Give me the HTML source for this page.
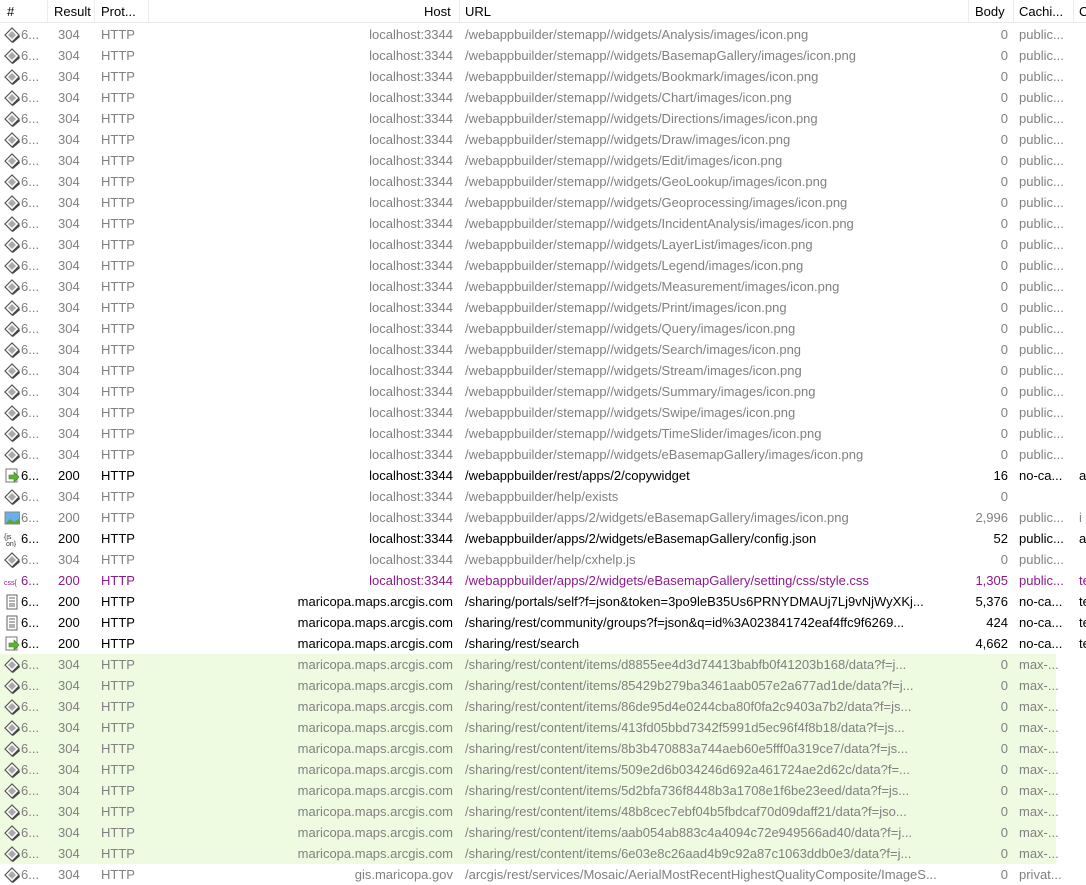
<!DOCTYPE html>
<html><head><meta charset="utf-8"><style>
*{margin:0;padding:0;box-sizing:border-box}
body{width:1086px;height:883px;overflow:hidden;background:#fff;font-family:"Liberation Sans",Tahoma,sans-serif;font-size:13px;color:#808080}
.hd{position:absolute;left:0;top:0;width:1086px;height:23px;border-bottom:1px solid #e8e8e8;color:#000}
.hd span{position:absolute;top:4px}
.sep{position:absolute;top:0;width:1px;height:22px;background:#ececec}
.r{position:absolute;left:0;width:1086px;height:21px;line-height:21px;white-space:nowrap}
.r span{position:absolute;top:0}
.g{background:linear-gradient(to right,#eefbe0 0,#eefbe0 1056px,transparent 1056px)}
.k{color:#000}.p{color:#8b1a8b}
.ic{position:absolute;left:4px;top:3px;width:16px;height:16px}
.n{left:21px}.res{left:58px}.pr{left:101px}
.h{right:633px;text-align:right}
.u{left:465px}
.b{right:78px;text-align:right}
.c{left:1019px}
.t{left:1079px}
</style></head><body>
<div class="hd">
<span style="left:7px">#</span><span style="left:54px">Result</span><span style="left:101px">Prot...</span><span style="left:424px">Host</span><span style="left:465px">URL</span><span style="left:975px">Body</span><span style="left:1019px">Cachi...</span><span style="left:1079px">C</span>
<div class="sep" style="left:47px"></div><div class="sep" style="left:94px"></div><div class="sep" style="left:148px"></div><div class="sep" style="left:459px"></div><div class="sep" style="left:968px"></div><div class="sep" style="left:1013px"></div><div class="sep" style="left:1073px"></div>
</div>
<svg width="0" height="0" style="position:absolute"><defs>
<g id="d"><path d="M1 8 L8 1 L15 8 L8 15Z" fill="#fff" stroke="#555" stroke-width="1.2"/><path d="M4 8 L8 4 L12 8 L8 12Z" fill="#aaa"/><path d="M8 15 L15 8 L16 10 L9 16Z" fill="#444"/></g>
<g id="a"><rect x="2" y="1" width="11" height="13" fill="#fff" stroke="#777"/><path d="M5 7h5V4l5 5-5 5v-3H5Z" fill="#5bb531" stroke="#3a7a1a" stroke-width=".6"/></g>
<g id="im"><rect x="1" y="2" width="15" height="12" fill="#6ab0e8" stroke="#888"/><path d="M1 14 L6 9 L10 12 L16 8 V14Z" fill="#5aa83a"/></g>
<g id="doc"><rect x="3" y="1" width="10" height="14" fill="#fff" stroke="#666"/><path d="M5 4h6M5 7h6M5 10h6M5 12h6" stroke="#666"/></g>
</defs></svg>
<div style="position:absolute;top:24px;left:0">
<div class="r" style="top:0"><svg class="ic"><use href="#d"/></svg><span class="n">6...</span><span class="res">304</span><span class="pr">HTTP</span><span class="h">localhost:3344</span><span class="u">/webappbuilder/stemapp//widgets/Analysis/images/icon.png</span><span class="b">0</span><span class="c">public...</span></div>
<div class="r" style="top:21px"><svg class="ic"><use href="#d"/></svg><span class="n">6...</span><span class="res">304</span><span class="pr">HTTP</span><span class="h">localhost:3344</span><span class="u">/webappbuilder/stemapp//widgets/BasemapGallery/images/icon.png</span><span class="b">0</span><span class="c">public...</span></div>
<div class="r" style="top:42px"><svg class="ic"><use href="#d"/></svg><span class="n">6...</span><span class="res">304</span><span class="pr">HTTP</span><span class="h">localhost:3344</span><span class="u">/webappbuilder/stemapp//widgets/Bookmark/images/icon.png</span><span class="b">0</span><span class="c">public...</span></div>
<div class="r" style="top:63px"><svg class="ic"><use href="#d"/></svg><span class="n">6...</span><span class="res">304</span><span class="pr">HTTP</span><span class="h">localhost:3344</span><span class="u">/webappbuilder/stemapp//widgets/Chart/images/icon.png</span><span class="b">0</span><span class="c">public...</span></div>
<div class="r" style="top:84px"><svg class="ic"><use href="#d"/></svg><span class="n">6...</span><span class="res">304</span><span class="pr">HTTP</span><span class="h">localhost:3344</span><span class="u">/webappbuilder/stemapp//widgets/Directions/images/icon.png</span><span class="b">0</span><span class="c">public...</span></div>
<div class="r" style="top:105px"><svg class="ic"><use href="#d"/></svg><span class="n">6...</span><span class="res">304</span><span class="pr">HTTP</span><span class="h">localhost:3344</span><span class="u">/webappbuilder/stemapp//widgets/Draw/images/icon.png</span><span class="b">0</span><span class="c">public...</span></div>
<div class="r" style="top:126px"><svg class="ic"><use href="#d"/></svg><span class="n">6...</span><span class="res">304</span><span class="pr">HTTP</span><span class="h">localhost:3344</span><span class="u">/webappbuilder/stemapp//widgets/Edit/images/icon.png</span><span class="b">0</span><span class="c">public...</span></div>
<div class="r" style="top:147px"><svg class="ic"><use href="#d"/></svg><span class="n">6...</span><span class="res">304</span><span class="pr">HTTP</span><span class="h">localhost:3344</span><span class="u">/webappbuilder/stemapp//widgets/GeoLookup/images/icon.png</span><span class="b">0</span><span class="c">public...</span></div>
<div class="r" style="top:168px"><svg class="ic"><use href="#d"/></svg><span class="n">6...</span><span class="res">304</span><span class="pr">HTTP</span><span class="h">localhost:3344</span><span class="u">/webappbuilder/stemapp//widgets/Geoprocessing/images/icon.png</span><span class="b">0</span><span class="c">public...</span></div>
<div class="r" style="top:189px"><svg class="ic"><use href="#d"/></svg><span class="n">6...</span><span class="res">304</span><span class="pr">HTTP</span><span class="h">localhost:3344</span><span class="u">/webappbuilder/stemapp//widgets/IncidentAnalysis/images/icon.png</span><span class="b">0</span><span class="c">public...</span></div>
<div class="r" style="top:210px"><svg class="ic"><use href="#d"/></svg><span class="n">6...</span><span class="res">304</span><span class="pr">HTTP</span><span class="h">localhost:3344</span><span class="u">/webappbuilder/stemapp//widgets/LayerList/images/icon.png</span><span class="b">0</span><span class="c">public...</span></div>
<div class="r" style="top:231px"><svg class="ic"><use href="#d"/></svg><span class="n">6...</span><span class="res">304</span><span class="pr">HTTP</span><span class="h">localhost:3344</span><span class="u">/webappbuilder/stemapp//widgets/Legend/images/icon.png</span><span class="b">0</span><span class="c">public...</span></div>
<div class="r" style="top:252px"><svg class="ic"><use href="#d"/></svg><span class="n">6...</span><span class="res">304</span><span class="pr">HTTP</span><span class="h">localhost:3344</span><span class="u">/webappbuilder/stemapp//widgets/Measurement/images/icon.png</span><span class="b">0</span><span class="c">public...</span></div>
<div class="r" style="top:273px"><svg class="ic"><use href="#d"/></svg><span class="n">6...</span><span class="res">304</span><span class="pr">HTTP</span><span class="h">localhost:3344</span><span class="u">/webappbuilder/stemapp//widgets/Print/images/icon.png</span><span class="b">0</span><span class="c">public...</span></div>
<div class="r" style="top:294px"><svg class="ic"><use href="#d"/></svg><span class="n">6...</span><span class="res">304</span><span class="pr">HTTP</span><span class="h">localhost:3344</span><span class="u">/webappbuilder/stemapp//widgets/Query/images/icon.png</span><span class="b">0</span><span class="c">public...</span></div>
<div class="r" style="top:315px"><svg class="ic"><use href="#d"/></svg><span class="n">6...</span><span class="res">304</span><span class="pr">HTTP</span><span class="h">localhost:3344</span><span class="u">/webappbuilder/stemapp//widgets/Search/images/icon.png</span><span class="b">0</span><span class="c">public...</span></div>
<div class="r" style="top:336px"><svg class="ic"><use href="#d"/></svg><span class="n">6...</span><span class="res">304</span><span class="pr">HTTP</span><span class="h">localhost:3344</span><span class="u">/webappbuilder/stemapp//widgets/Stream/images/icon.png</span><span class="b">0</span><span class="c">public...</span></div>
<div class="r" style="top:357px"><svg class="ic"><use href="#d"/></svg><span class="n">6...</span><span class="res">304</span><span class="pr">HTTP</span><span class="h">localhost:3344</span><span class="u">/webappbuilder/stemapp//widgets/Summary/images/icon.png</span><span class="b">0</span><span class="c">public...</span></div>
<div class="r" style="top:378px"><svg class="ic"><use href="#d"/></svg><span class="n">6...</span><span class="res">304</span><span class="pr">HTTP</span><span class="h">localhost:3344</span><span class="u">/webappbuilder/stemapp//widgets/Swipe/images/icon.png</span><span class="b">0</span><span class="c">public...</span></div>
<div class="r" style="top:399px"><svg class="ic"><use href="#d"/></svg><span class="n">6...</span><span class="res">304</span><span class="pr">HTTP</span><span class="h">localhost:3344</span><span class="u">/webappbuilder/stemapp//widgets/TimeSlider/images/icon.png</span><span class="b">0</span><span class="c">public...</span></div>
<div class="r" style="top:420px"><svg class="ic"><use href="#d"/></svg><span class="n">6...</span><span class="res">304</span><span class="pr">HTTP</span><span class="h">localhost:3344</span><span class="u">/webappbuilder/stemapp//widgets/eBasemapGallery/images/icon.png</span><span class="b">0</span><span class="c">public...</span></div>
<div class="r k" style="top:441px"><svg class="ic"><use href="#a"/></svg><span class="n">6...</span><span class="res">200</span><span class="pr">HTTP</span><span class="h">localhost:3344</span><span class="u">/webappbuilder/rest/apps/2/copywidget</span><span class="b">16</span><span class="c">no-ca...</span><span class="t">a</span></div>
<div class="r" style="top:462px"><svg class="ic"><use href="#d"/></svg><span class="n">6...</span><span class="res">304</span><span class="pr">HTTP</span><span class="h">localhost:3344</span><span class="u">/webappbuilder/help/exists</span><span class="b">0</span></div>
<div class="r" style="top:483px"><svg class="ic"><use href="#im"/></svg><span class="n">6...</span><span class="res">200</span><span class="pr">HTTP</span><span class="h">localhost:3344</span><span class="u">/webappbuilder/apps/2/widgets/eBasemapGallery/images/icon.png</span><span class="b">2,996</span><span class="c">public...</span><span class="t">i</span></div>
<div class="r k" style="top:504px"><svg class="ic"><text x="0" y="8" font-size="7" fill="#333" font-family="Liberation Sans">{js</text><text x="2" y="15" font-size="7" fill="#333" font-family="Liberation Sans">on}</text></svg><span class="n">6...</span><span class="res">200</span><span class="pr">HTTP</span><span class="h">localhost:3344</span><span class="u">/webappbuilder/apps/2/widgets/eBasemapGallery/config.json</span><span class="b">52</span><span class="c">public...</span><span class="t">a</span></div>
<div class="r" style="top:525px"><svg class="ic"><use href="#d"/></svg><span class="n">6...</span><span class="res">304</span><span class="pr">HTTP</span><span class="h">localhost:3344</span><span class="u">/webappbuilder/help/cxhelp.js</span><span class="b">0</span><span class="c">public...</span></div>
<div class="r p" style="top:546px"><svg class="ic"><text x="0" y="12" font-size="7" fill="#8b1a8b" font-family="Liberation Sans">css{</text></svg><span class="n">6...</span><span class="res">200</span><span class="pr">HTTP</span><span class="h">localhost:3344</span><span class="u">/webappbuilder/apps/2/widgets/eBasemapGallery/setting/css/style.css</span><span class="b">1,305</span><span class="c">public...</span><span class="t">te</span></div>
<div class="r k" style="top:567px"><svg class="ic"><use href="#doc"/></svg><span class="n">6...</span><span class="res">200</span><span class="pr">HTTP</span><span class="h">maricopa.maps.arcgis.com</span><span class="u">/sharing/portals/self?f=json&amp;token=3po9leB35Us6PRNYDMAUj7Lj9vNjWyXKj...</span><span class="b">5,376</span><span class="c">no-ca...</span><span class="t">te</span></div>
<div class="r k" style="top:588px"><svg class="ic"><use href="#doc"/></svg><span class="n">6...</span><span class="res">200</span><span class="pr">HTTP</span><span class="h">maricopa.maps.arcgis.com</span><span class="u">/sharing/rest/community/groups?f=json&amp;q=id%3A023841742eaf4ffc9f6269...</span><span class="b">424</span><span class="c">no-ca...</span><span class="t">te</span></div>
<div class="r k" style="top:609px"><svg class="ic"><use href="#a"/></svg><span class="n">6...</span><span class="res">200</span><span class="pr">HTTP</span><span class="h">maricopa.maps.arcgis.com</span><span class="u">/sharing/rest/search</span><span class="b">4,662</span><span class="c">no-ca...</span><span class="t">te</span></div>
<div class="r g" style="top:630px"><svg class="ic"><use href="#d"/></svg><span class="n">6...</span><span class="res">304</span><span class="pr">HTTP</span><span class="h">maricopa.maps.arcgis.com</span><span class="u">/sharing/rest/content/items/d8855ee4d3d74413babfb0f41203b168/data?f=j...</span><span class="b">0</span><span class="c">max-...</span></div>
<div class="r g" style="top:651px"><svg class="ic"><use href="#d"/></svg><span class="n">6...</span><span class="res">304</span><span class="pr">HTTP</span><span class="h">maricopa.maps.arcgis.com</span><span class="u">/sharing/rest/content/items/85429b279ba3461aab057e2a677ad1de/data?f=j...</span><span class="b">0</span><span class="c">max-...</span></div>
<div class="r g" style="top:672px"><svg class="ic"><use href="#d"/></svg><span class="n">6...</span><span class="res">304</span><span class="pr">HTTP</span><span class="h">maricopa.maps.arcgis.com</span><span class="u">/sharing/rest/content/items/86de95d4e0244cba80f0fa2c9403a7b2/data?f=js...</span><span class="b">0</span><span class="c">max-...</span></div>
<div class="r g" style="top:693px"><svg class="ic"><use href="#d"/></svg><span class="n">6...</span><span class="res">304</span><span class="pr">HTTP</span><span class="h">maricopa.maps.arcgis.com</span><span class="u">/sharing/rest/content/items/413fd05bbd7342f5991d5ec96f4f8b18/data?f=js...</span><span class="b">0</span><span class="c">max-...</span></div>
<div class="r g" style="top:714px"><svg class="ic"><use href="#d"/></svg><span class="n">6...</span><span class="res">304</span><span class="pr">HTTP</span><span class="h">maricopa.maps.arcgis.com</span><span class="u">/sharing/rest/content/items/8b3b470883a744aeb60e5fff0a319ce7/data?f=js...</span><span class="b">0</span><span class="c">max-...</span></div>
<div class="r g" style="top:735px"><svg class="ic"><use href="#d"/></svg><span class="n">6...</span><span class="res">304</span><span class="pr">HTTP</span><span class="h">maricopa.maps.arcgis.com</span><span class="u">/sharing/rest/content/items/509e2d6b034246d692a461724ae2d62c/data?f=...</span><span class="b">0</span><span class="c">max-...</span></div>
<div class="r g" style="top:756px"><svg class="ic"><use href="#d"/></svg><span class="n">6...</span><span class="res">304</span><span class="pr">HTTP</span><span class="h">maricopa.maps.arcgis.com</span><span class="u">/sharing/rest/content/items/5d2bfa736f8448b3a1708e1f6be23eed/data?f=js...</span><span class="b">0</span><span class="c">max-...</span></div>
<div class="r g" style="top:777px"><svg class="ic"><use href="#d"/></svg><span class="n">6...</span><span class="res">304</span><span class="pr">HTTP</span><span class="h">maricopa.maps.arcgis.com</span><span class="u">/sharing/rest/content/items/48b8cec7ebf04b5fbdcaf70d09daff21/data?f=jso...</span><span class="b">0</span><span class="c">max-...</span></div>
<div class="r g" style="top:798px"><svg class="ic"><use href="#d"/></svg><span class="n">6...</span><span class="res">304</span><span class="pr">HTTP</span><span class="h">maricopa.maps.arcgis.com</span><span class="u">/sharing/rest/content/items/aab054ab883c4a4094c72e949566ad40/data?f=j...</span><span class="b">0</span><span class="c">max-...</span></div>
<div class="r g" style="top:819px"><svg class="ic"><use href="#d"/></svg><span class="n">6...</span><span class="res">304</span><span class="pr">HTTP</span><span class="h">maricopa.maps.arcgis.com</span><span class="u">/sharing/rest/content/items/6e03e8c26aad4b9c92a87c1063ddb0e3/data?f=j...</span><span class="b">0</span><span class="c">max-...</span></div>
<div class="r" style="top:840px"><svg class="ic"><use href="#d"/></svg><span class="n">6...</span><span class="res">304</span><span class="pr">HTTP</span><span class="h">gis.maricopa.gov</span><span class="u">/arcgis/rest/services/Mosaic/AerialMostRecentHighestQualityComposite/ImageS...</span><span class="b">0</span><span class="c">privat...</span></div>
</div>
</body></html>
